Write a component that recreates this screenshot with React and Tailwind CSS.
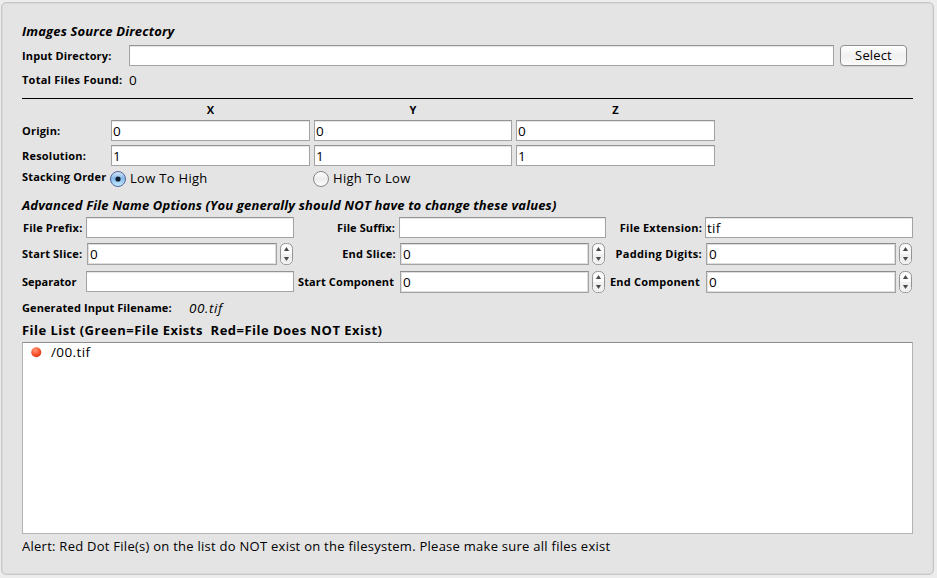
import React from "react";

const FIELD =
  "h-[21px] shrink-0 border border-[#a3a3a3] border-t-[#949494] bg-white pl-[1px] text-[13.5px] leading-[20px] shadow-[inset_0_1px_1px_#e4e4e4] whitespace-nowrap";

function Field({ className, value }) {
  return <div className={`${FIELD} ${className}`}>{value}</div>;
}

function Label({ className, text }) {
  return (
    <div className={`shrink-0 whitespace-pre text-[11px] leading-[16px] font-bold ${className}`}>
      <span>{text}</span>
    </div>
  );
}

function Spinner({ className, value }) {
  return (
    <div className="flex shrink-0 items-center">
      <div
        className={`h-[22px] border border-[#a3a3a3] border-t-[#8c8c8c] bg-white pl-[2px] text-[13.5px] leading-[21px] shadow-[inset_0_0_0_1px_#dedede] ${className}`}
      >
        {value}
      </div>
      <svg className="ml-[3px] shrink-0" width="13" height="22" viewBox="0 0 13 22">
        <rect x="0.5" y="0.5" width="12" height="21" rx="5" fill="#fbfbfb" stroke="#929292" />
        <path d="M1 11h11v5.5a4.500 4.500 0 0 1-4.500 4.500h-2a4.500 4.500 0 0 1-4.500-4.500z" fill="#f0f0f0" />
        <path d="M6.500 4l2.600 4H3.900zM6.500 18L3.900 14h5.200z" fill="#4a4a4a" />
      </svg>
    </div>
  );
}

function Radio({ checked }) {
  return (
    <svg className="shrink-0" width="17" height="17" viewBox="0 0 17 17">
      <defs>
        <linearGradient id="blue" x1="0" y1="0" x2="0" y2="1">
          <stop offset="0" stopColor="#dbe8f8" />
          <stop offset="0.45" stopColor="#86b8ec" />
          <stop offset="1" stopColor="#c9f0ff" />
        </linearGradient>
        <linearGradient id="gray" x1="0" y1="0" x2="0" y2="1">
          <stop offset="0" stopColor="#ffffff" />
          <stop offset="0.5" stopColor="#ececec" />
          <stop offset="1" stopColor="#ffffff" />
        </linearGradient>
      </defs>
      <circle
        cx="8"
        cy="9"
        r="7.500"
        fill={checked ? "url(#blue)" : "url(#gray)"}
        stroke={checked ? "#50639b" : "#868686"}
      />
      {checked && <circle cx="8" cy="9" r="2.600" fill="#101c30" />}
    </svg>
  );
}

function RedDot() {
  return (
    <svg className="shrink-0" width="11" height="11" viewBox="0 0 11 11">
      <defs>
        <radialGradient id="red" cx="0.4" cy="0.3" r="0.7">
          <stop offset="0" stopColor="#ff9b78" />
          <stop offset="0.6" stopColor="#fa5530" />
          <stop offset="1" stopColor="#d93a18" />
        </radialGradient>
      </defs>
      <circle cx="5.300" cy="5.300" r="5" fill="url(#red)" />
    </svg>
  );
}

export default function App() {
  return (
    <div className="h-[578px] w-[937px] overflow-hidden bg-[#ededed] pt-[2px] pl-[1px] font-['Open_Sans','Noto_Sans',sans-serif] font-medium text-black">
      <div className="flex h-[573px] w-[933px] flex-col rounded-[5px] border border-[#c6c6c6] bg-[#e4e4e4] pl-[20px] shadow-[inset_0_0_0_1px_#dadada]">
        <div className="mt-[19px] h-[20px] text-[13px] leading-[19px] font-bold tracking-[0.15px] italic whitespace-nowrap">
          <span>Images Source Directory</span>
        </div>
        <div className="mt-[3px] flex h-[21px] items-center">
          <Label className="w-[107px] tracking-[0.13px]" text="Input Directory:" />
          <Field className="w-[705px]" value="" />
          <button className="ml-[6px] flex h-[21px] w-[67px] items-start justify-center rounded-[4px] border border-[#8f8f8f] bg-linear-to-b from-white via-[#f0f0f0] to-[#fbfbfb] text-[13px] leading-[18px] tracking-[0.15px] shadow-[0_1px_1px_#cfcfcf]">
            Select
          </button>
        </div>
        <div className="mt-[4px] flex h-[20px] items-center">
          <Label className="w-[107px] tracking-[0.25px]" text="Total Files Found:" />
          <span className="text-[13.5px] leading-[19px]">0</span>
        </div>
        <div className="mt-[8px] h-px w-[891px] shrink-0 bg-black" />
        <div className="mt-[3px] ml-[89px] flex h-[16px] gap-[4px] text-center">
          <Label className="w-[199px]" text="X" />
          <Label className="w-[198px]" text="Y" />
          <Label className="w-[199px]" text="Z" />
        </div>
        <div className="mt-[2px] flex h-[21px] items-center">
          <Label className="w-[89px] tracking-[0.2px]" text="Origin:" />
          <div className="flex gap-[4px]">
            <Field className="w-[199px]" value="0" />
            <Field className="w-[198px]" value="0" />
            <Field className="w-[199px]" value="0" />
          </div>
        </div>
        <div className="mt-[4px] flex h-[21px] items-center">
          <Label className="w-[89px] tracking-[0.2px]" text="Resolution:" />
          <div className="flex gap-[4px]">
            <Field className="w-[199px]" value="1" />
            <Field className="w-[198px]" value="1" />
            <Field className="w-[199px]" value="1" />
          </div>
        </div>
        <div className="mt-[4px] flex h-[17px] items-center text-[13px] leading-[17px] tracking-[0.3px] whitespace-nowrap">
          <Label className="w-[88px] pb-[3px] tracking-[0.18px]" text="Stacking Order" />
          <div className="flex w-[203px] items-center gap-[3px]">
            <Radio checked />
            <span>Low To High</span>
          </div>
          <div className="flex items-center gap-[3px]">
            <Radio />
            <span>High To Low</span>
          </div>
        </div>
        <div className="mt-[8px] h-[20px] text-[13px] leading-[20px] font-bold tracking-[0.155px] italic whitespace-nowrap">
          <span>Advanced File Name Options (You generally should NOT have to change these values)</span>
        </div>
        <div className="mt-[2px] flex h-[21px] items-center">
          <Label className="w-[64px] pl-[1px] tracking-[0.15px]" text="File Prefix:" />
          <Field className="w-[208px]" value="" />
          <Label className="w-[105px] pr-[4px] text-right tracking-[0.1px]" text="File Suffix:" />
          <Field className="w-[207px]" value="" />
          <Label className="w-[99px] pr-[3px] text-right tracking-[0.2px]" text="File Extension:" />
          <Field className="w-[208px] tracking-[0.3px]" value="tif" />
        </div>
        <div className="mt-[5px] flex h-[22px] items-center">
          <Label className="w-[65px] tracking-[0.17px]" text="Start Slice:" />
          <Spinner className="w-[190px]" value="0" />
          <Label className="w-[107px] pr-[4px] text-right tracking-[0.26px]" text="End Slice:" />
          <Spinner className="w-[189px]" value="0" />
          <Label className="w-[101px] pr-[4px] text-right tracking-[0.32px]" text="Padding Digits:" />
          <Spinner className="w-[190px]" value="0" />
        </div>
        <div className="mt-[6px] flex h-[22px] items-center">
          <Label className="w-[64px]" text="Separator" />
          <Field className="mb-px w-[208px]" value="" />
          <Label className="w-[106px] pl-[4px] tracking-[0.12px]" text="Start Component" />
          <Spinner className="w-[189px]" value="0" />
          <Label className="w-[101px] pl-[5px] tracking-[0.2px]" text="End Component" />
          <Spinner className="w-[190px]" value="0" />
        </div>
        <div className="mt-[5px] flex h-[20px] items-center">
          <Label className="w-[167px] tracking-[0.1px]" text="Generated Input Filename:" />
          <span className="text-[13.5px] leading-[19px] tracking-[0.6px] italic">00.tif</span>
        </div>
        <div className="mt-[2px] h-[20px] text-[13px] leading-[20px] font-bold tracking-[0.48px] whitespace-pre">
          <span>{"File List (Green=File Exists  Red=File Does NOT Exist)"}</span>
        </div>
        <div className="mt-[2px] h-[192px] w-[891px] shrink-0 border border-[#b3b3b3] border-t-[#8e8e8e] bg-white">
          <div className="flex h-[19px] items-center pl-[8px] text-[13.5px] leading-[19px] tracking-[0.4px]">
            <RedDot />
            <span className="ml-[9px]">/00.tif</span>
          </div>
        </div>
        <div className="mt-[3px] h-[19px] text-[13px] leading-[19px] tracking-[0.26px] whitespace-nowrap">
          <span>Alert: Red Dot File(s) on the list do NOT exist on the filesystem. Please make sure all files exist</span>
        </div>
      </div>
    </div>
  );
}
